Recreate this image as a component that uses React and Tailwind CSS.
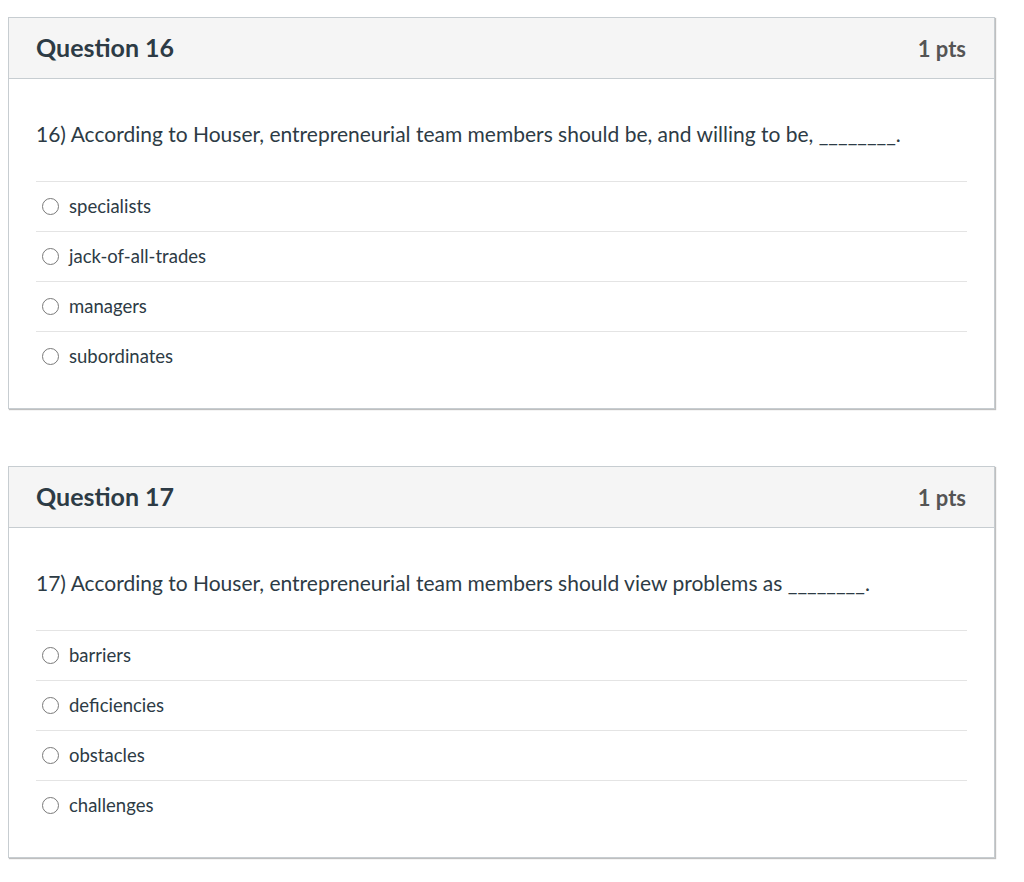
import React from 'react';

const questions = [
  {
    num: 16,
    text: '16) According to Houser, entrepreneurial team members should be, and willing to be, ________.',
    options: ['specialists', 'jack-of-all-trades', 'managers', 'subordinates'],
  },
  {
    num: 17,
    text: '17) According to Houser, entrepreneurial team members should view problems as ________.',
    options: ['barriers', 'deficiencies', 'obstacles', 'challenges'],
  },
];

function Question({ q }) {
  return (
    <div className="w-[987px] border border-[#c7cdd1] bg-white shadow-[1px_1px_1px_rgba(0,0,0,0.25)]">
      <div className="h-[61px] bg-[#f5f5f5] border-b border-[#c7cdd1] px-[27px] flex items-center justify-between">
        <h2 className="text-[25px] font-bold text-[#2d3b45]">Question {q.num}</h2>
        <span className="text-[22px] font-bold text-[#555] pr-px">1 pts</span>
      </div>
      <div className="px-[27px] pt-[40px] pb-[27px]">
        <p className="text-[21px] leading-[30px] text-[#2d3b45]">{q.text}</p>
        <div className="mt-[32px]">
          {q.options.map((o) => (
            <div key={o} className="h-[50px] border-t border-[#e4e4e4] flex items-center pl-[6px]">
              <span className="w-[17px] h-[17px] rounded-full border border-[#7a7a7a] bg-white"></span>
              <span className="ml-[10px] text-[18.5px] text-[#2d3b45]">{o}</span>
            </div>
          ))}
        </div>
      </div>
    </div>
  );
}

export default function App() {
  return (
    <div className="min-h-[882px] bg-white pt-[17px] pl-[8px] flex flex-col gap-[57px]" style={{ fontFamily: 'Lato, "Liberation Sans", sans-serif' }}>
      {questions.map((q) => (
        <Question key={q.num} q={q} />
      ))}
    </div>
  );
}
